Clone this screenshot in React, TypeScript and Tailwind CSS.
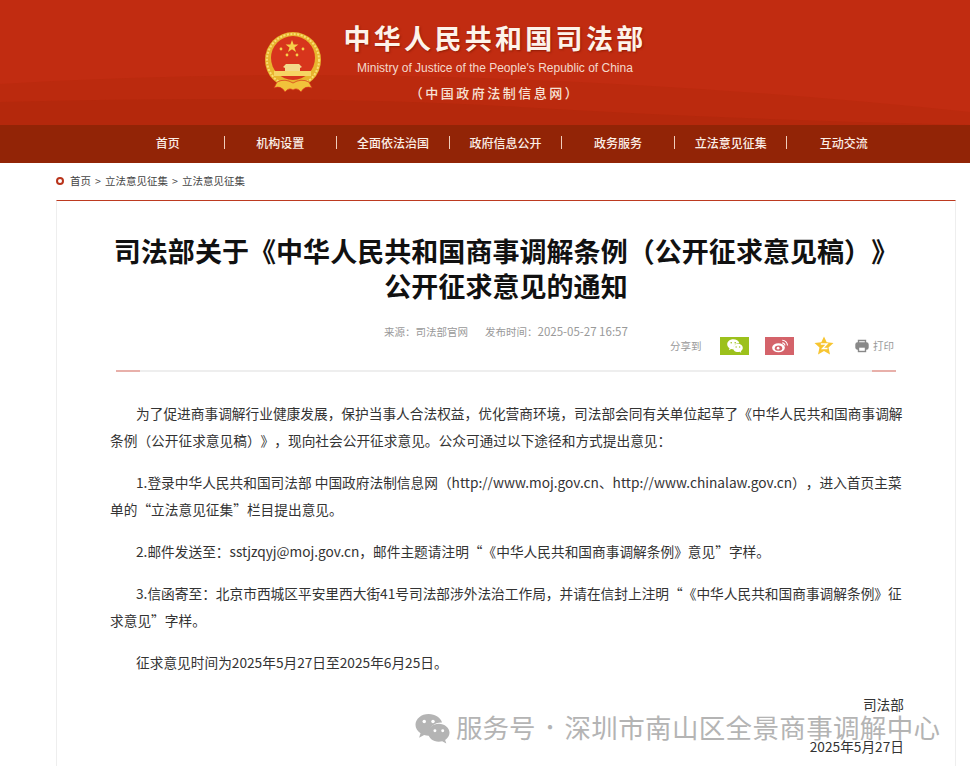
const navItems = ["首页", "机构设置", "全面依法治国", "政府信息公开", "政务服务", "立法意见征集", "互动交流"];

const Emblem = () => (
  <svg width="60" height="62" viewBox="0 0 60 62" className="shrink-0">
    <circle cx="29" cy="28" r="28" fill="#e8b42e" />
    <circle cx="29" cy="28" r="26" fill="none" stroke="#f9de74" strokeWidth="2" strokeDasharray="2 1.500" />
    <circle cx="29" cy="26" r="22" fill="#d7351c" />
    <polygon points="28,8 29.600,12.600 34.400,12.600 30.500,15.500 32,20 28,17.300 24,20 25.500,15.500 21.600,12.600 26.400,12.600" fill="#f6cf4a" />
    <circle cx="17" cy="17" r="1.400" fill="#f6cf4a" />
    <circle cx="39" cy="17" r="1.400" fill="#f6cf4a" />
    <circle cx="23" cy="23" r="1.400" fill="#f6cf4a" />
    <circle cx="33" cy="23" r="1.400" fill="#f6cf4a" />
    <path d="M19 35 L22 32 H35 L38 35 L36 36 V39 H21 V36 Z" fill="#f3d98a" />
    <rect x="10" y="39" width="37" height="5" fill="#f6d463" />
    <path d="M13 50 Q21 46 29 51 Q37 46 45 50 L48 56 Q41 53 37 60 Q33 55 29 58 Q25 55 21 60 Q17 53 10 56 Z" fill="#f1c23b" stroke="#d7351c" strokeWidth="0.700" />
  </svg>
);

const WechatGlyph = ({ fill, size, eye }: { fill: string; size: number; eye: string }) => (
  <svg width={size} height={size} viewBox="0 0 36 32">
    <path d="M14 1C6.500 1 0.500 6 0.500 12.200c0 3.600 2 6.700 5.200 8.800L4.200 25.500l5.200-2.700c1.500.4 3 .6 4.600.6h1C14.700 22.400 14.500 21.400 14.500 20.400 14.500 14.500 20 9.800 27 9.800c.3 0 .5 0 .8 0C26.500 4.700 20.800 1 14 1z" fill={fill} />
    <path d="M35.500 20.300c0-5.100-5-9.300-11-9.300s-11 4.200-11 9.300 5 9.300 11 9.300c1.200 0 2.400-.2 3.500-.5l4.200 2.300-1.200-3.700c2.700-1.800 4.500-4.500 4.500-7.400z" fill={fill} />
    <circle cx="9.500" cy="8.800" r="1.800" fill={eye} />
    <circle cx="18.500" cy="8.800" r="1.800" fill={eye} />
    <circle cx="20.500" cy="18.300" r="1.500" fill={eye} />
    <circle cx="28.500" cy="18.300" r="1.500" fill={eye} />
  </svg>
);

export default function App() {
  return (
    <div className="w-[970px] h-[766px] overflow-hidden bg-white relative font-['Noto_Sans_CJK_SC','Liberation_Sans',sans-serif] [text-spacing-trim:space-all]">
      <header className="h-[125px] relative overflow-hidden bg-[#c12c11]">
        <svg className="absolute inset-0" width="970" height="125" viewBox="0 0 970 125">
          <path d="M0 84 Q240 70 480 78 T970 112 V125 H0 Z" fill="#bb2a0e" />
          <path d="M0 102 Q300 94 520 107 T970 125 H0 Z" fill="#b4280c" />
        </svg>
        <div className="relative flex ml-[264px] pt-[32px] gap-[21px]">
          <Emblem />
          <div className="flex flex-col items-center -mt-[14px] w-[300px]">
            <div className="text-[27px] leading-[40px] font-bold tracking-[3.300px] text-[#fdf3ea] whitespace-nowrap [text-shadow:1px_1px_2px_rgba(110,20,0,0.6)]">中华人民共和国司法部</div>
            <div className="font-['Liberation_Sans',sans-serif] text-[12px] leading-[14px] mt-[3px] text-[#f4d9cc] whitespace-nowrap">Ministry of Justice of the People's Republic of China</div>
            <div className="text-[13px] leading-[18px] mt-[9px] font-medium tracking-[2.500px] text-[#f7e2d6] whitespace-nowrap">（中国政府法制信息网）</div>
          </div>
        </div>
      </header>

      <nav className="h-[38px] bg-[#922406] pl-[112px]">
        <ul className="grid grid-cols-7 w-[788px] h-full items-center pb-[3px]">
          {navItems.map((item, i) => (
            <li key={item} className={`text-center text-[12px] leading-[13px] font-medium text-[#fbeee6] ${i < 6 ? "border-r border-[#f0cdbb]" : ""}`}>
              {item}
            </li>
          ))}
        </ul>
      </nav>

      <div className="h-[37px] flex items-center pl-[56px] pb-[2px] gap-[6px] text-[10.5px] text-[#444]">
        <span className="w-[8px] h-[8px] rounded-full border-2 border-[#b9341b]" />
        <span className="flex">
          首页<span className="w-[14px] text-center">&gt;</span>立法意见征集<span className="w-[14px] text-center">&gt;</span>立法意见征集
        </span>
      </div>

      <main className="ml-[56px] w-[900px] h-[600px] border-t border-t-[#bd3a20] border-x border-x-[#eeeeee] pt-[32px]">
        <h1 className="text-center text-[27px] leading-[35px] font-bold text-[#111] whitespace-nowrap tracking-[0.05px]">
          司法部关于《中华人民共和国商事调解条例（公开征求意见稿）》
          <br />
          公开征求意见的通知
        </h1>

        <div className="relative h-[48px] mt-[18px]">
          <div className="pl-[327px] pt-[3px] text-[10.5px] leading-[14px] text-[#999] whitespace-nowrap">
            来源：司法部官网<span className="ml-[17px]">发布时间：<span className="text-[11.5px]">2025-05-27 16:57</span></span>
          </div>
          <div className="absolute left-[613px] top-[15px] flex items-center text-[10.5px] text-[#999]">
            <span className="w-[50px]">分享到</span>
            <span className="w-[29px] h-[18px] bg-[#9cc11c] flex items-center justify-center"><WechatGlyph fill="#fff" size={16} eye="#9cc11c" /></span>
            <span className="w-[29px] h-[18px] ml-[16px] bg-[#d4636a] flex items-center justify-center">
              <svg width="18" height="15" viewBox="0 0 24 20" fill="none">
                <ellipse cx="10" cy="13" rx="8.500" ry="6" fill="#fff" />
                <ellipse cx="10" cy="13.500" rx="5" ry="3.500" fill="#d4636a" />
                <circle cx="9.500" cy="13.500" r="1.800" fill="#fff" />
                <path d="M15 3 A7 7 0 0 1 22 10" stroke="#fff" strokeWidth="1.500" />
                <path d="M15 6.500 A3.500 3.500 0 0 1 18.500 10" stroke="#fff" strokeWidth="1.500" />
              </svg>
            </span>
            <span className="ml-[19px] w-[22px] flex justify-center">
              <svg width="20" height="19" viewBox="0 0 20 19">
                <polygon points="10,0.500 12.700,6.300 19.500,7 14.500,11.500 16,18.500 10,15 4,18.500 5.500,11.500 0.500,7 7.300,6.300" fill="#f7c531" />
                <path d="M6.800 8H13L8.500 12.500H13.500" stroke="#fff" strokeWidth="1.300" fill="none" />
              </svg>
            </span>
            <span className="ml-[20px] flex items-center gap-[4px]">
              <svg width="14" height="14" viewBox="0 0 14 14" fill="none" stroke="#888" strokeWidth="1.400">
                <path d="M3.500 4V1.500H10.500V4" />
                <rect x="1" y="4" width="12" height="6" rx="1.500" fill="#888" />
                <rect x="3.500" y="8" width="7" height="4.500" fill="#fff" />
              </svg>
              打印
            </span>
          </div>
        </div>

        <div className="mx-[59px] mt-[1px] h-[2px] bg-[#eeeeee] flex justify-between">
          <span className="w-[24px] bg-[#e8b0aa]" />
          <span className="w-[24px] bg-[#e8b0aa]" />
        </div>

        <article className="ml-[53px] w-[794px] mt-[28px] text-[13.7px] leading-[27px] text-[#333] space-y-[15px]">
          <p className="indent-[26px]">为了促进商事调解行业健康发展，保护当事人合法权益，优化营商环境，司法部会同有关单位起草了《中华人民共和国商事调解条例（公开征求意见稿）》，现向社会公开征求意见。公众可通过以下途径和方式提出意见：</p>
          <p className="indent-[26px]">1.登录中华人民共和国司法部 中国政府法制信息网（http://www.moj.gov.cn、http://www.chinalaw.gov.cn），进入首页主菜单的“立法意见征集”栏目提出意见。</p>
          <p className="indent-[26px]">2.邮件发送至：sstjzqyj@moj.gov.cn，邮件主题请注明“《中华人民共和国商事调解条例》意见”字样。</p>
          <p className="indent-[26px]">3.信函寄至：北京市西城区平安里西大街41号司法部涉外法治工作局，并请在信封上注明“《中华人民共和国商事调解条例》征求意见”字样。</p>
          <p className="indent-[26px]">征求意见时间为2025年5月27日至2025年6月25日。</p>
          <p className="text-right">司法部</p>
          <p className="text-right">2025年5月27日</p>
        </article>
      </main>

      <div className="absolute left-[415px] top-[708px] flex items-center text-[26.5px] leading-[36px] text-[#b4b4b4] whitespace-nowrap">
        <span className="w-[41px] pt-[3px]"><WechatGlyph fill="#b4b4b4" size={35} eye="#fff" /></span>
        <span>服务号</span>
        <span className="w-[29px] text-center text-[20px]">·</span>
        <span className="tracking-[0.35px]">深圳市南山区全景商事调解中心</span>
      </div>
    </div>
  );
}
